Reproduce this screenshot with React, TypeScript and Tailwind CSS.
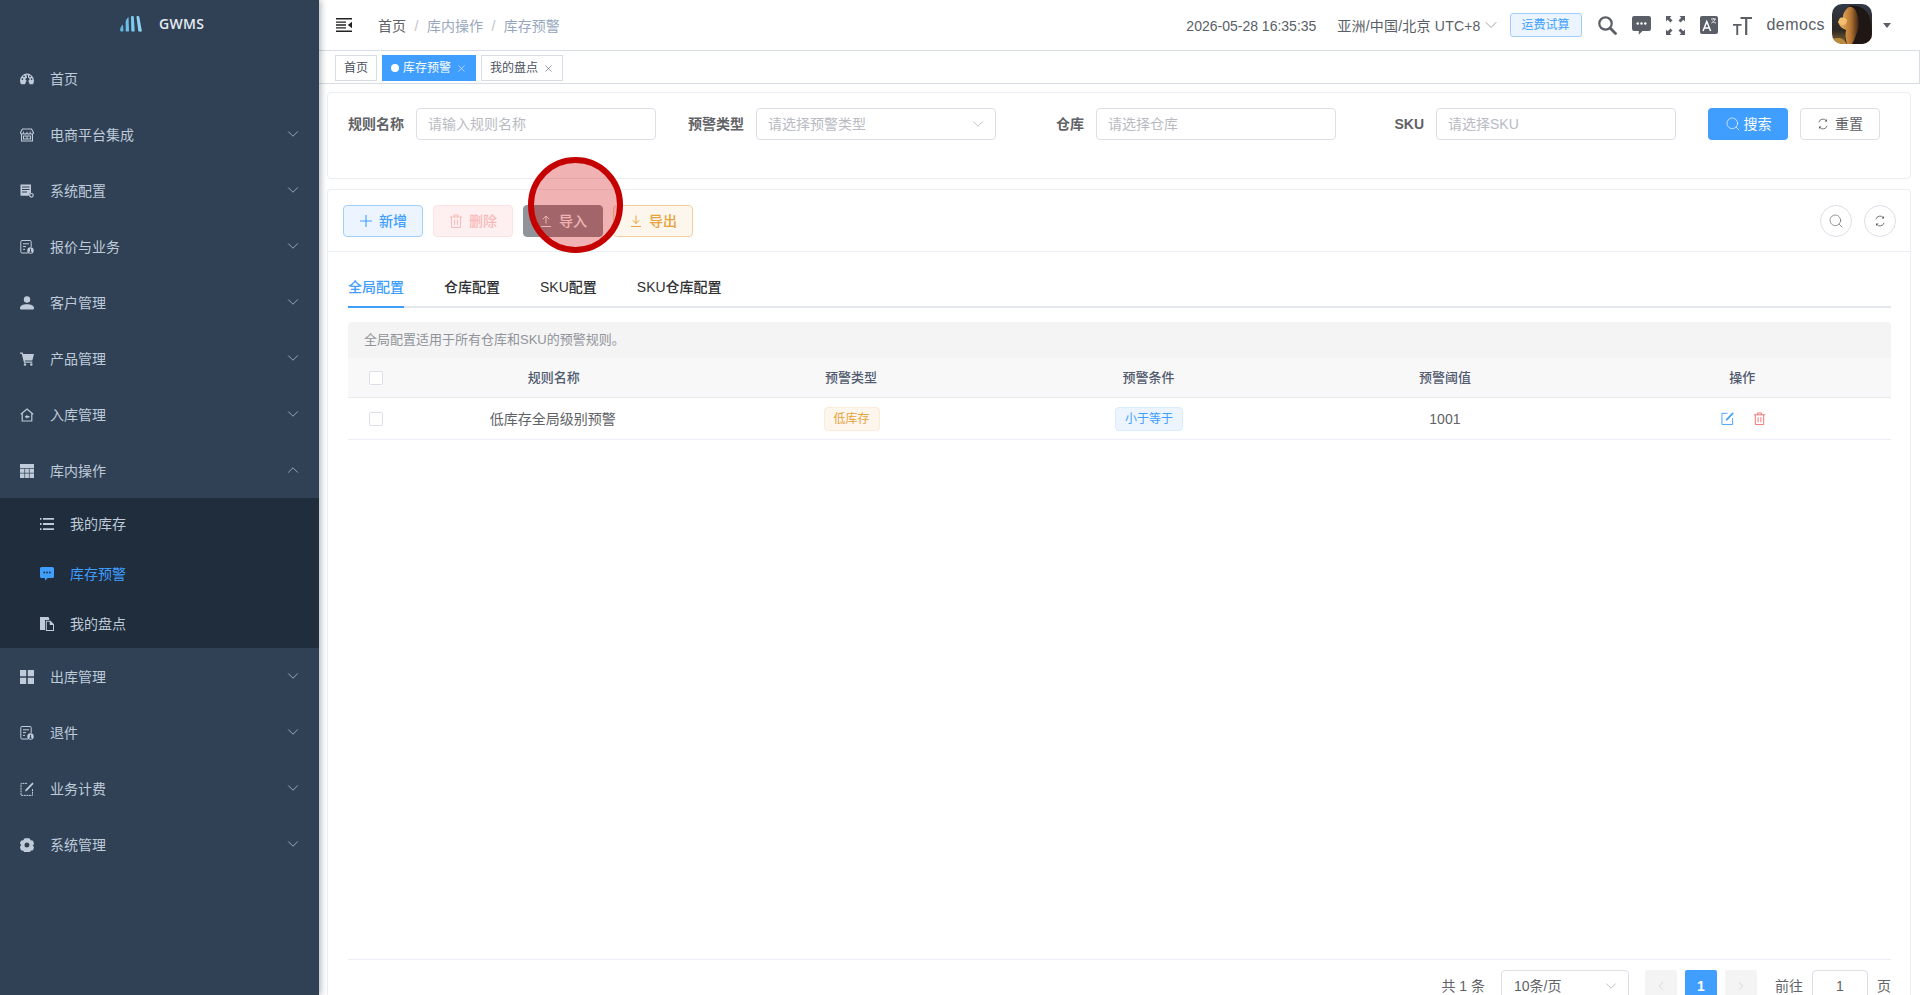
import { ChevronDown, ChevronLeft, ChevronRight, ChevronUp, Search, X } from "lucide-react";
import type { ReactNode } from "react";

const ic = "w-[14px] h-[14px] shrink-0";

function Svg({ children, className = ic }: { children: ReactNode; className?: string }) {
  return (
    <svg viewBox="0 0 14 14" className={className} fill="none">
      {children}
    </svg>
  );
}

const DashIcon = () => (
  <Svg>
    <path
      fill="currentColor"
      fillRule="evenodd"
      d="M7 1.600a7 7 0 0 1 7 7c0 1.500-.4 2.700-1 3.600H9.600L8.200 8.600a1 1 0 0 0 .1-2.600L7.600 2.800H6.400L7 6a1.300 1.300 0 0 0-.4 2.600l-1.600 3.600H1c-.6-.9-1-2.100-1-3.600a7 7 0 0 1 7-7zM2.400 6.200a.9.9 0 1 0 0 1.800.9.9 0 0 0 0-1.800zm9.200 0a.9.9 0 1 0 0 1.800.9.9 0 0 0 0-1.800zM4 3.400a.9.9 0 1 0 0 1.800.9.9 0 0 0 0-1.800zm6 0a.9.9 0 1 0 0 1.800.9.9 0 0 0 0-1.800z"
    />
  </Svg>
);
const ShopIcon = () => (
  <Svg>
    <path
      stroke="currentColor"
      strokeWidth="1.100"
      d="M2.500 1h9l2 3.500c0 1-.8 1.600-1.600 1.600s-1.500-.6-1.700-1.300c-.2.700-1 1.300-1.800 1.300S7.200 5.500 7 4.800c-.3.700-1 1.300-1.900 1.300S3.700 5.500 3.500 4.800C3.300 5.500 2.700 6.100 2 6.100S.5 5.500.5 4.500L2.500 1zM1.500 6v7h11V6M3.500 8h7v3h-7zM7 8v3"
    />
  </Svg>
);
const ConfigIcon = () => (
  <Svg>
    <path fill="currentColor" d="M.5.500h10.500v8.200a3 3 0 0 0-2.300 3H.5z" />
    <path stroke="#304156" strokeWidth="1" d="M2 3h7.500M2 5.500h7.500M2 8h5" />
    <circle cx="11.400" cy="11.300" r="1.800" stroke="currentColor" strokeWidth="1.200" />
  </Svg>
);
const QuoteIcon = () => (
  <Svg>
    <path
      stroke="currentColor"
      strokeWidth="1"
      d="M8 13H2a1.200 1.200 0 0 1-1.200-1.200V1.700A1.200 1.200 0 0 1 2 .5h8A1.200 1.200 0 0 1 11.200 1.700V7M3 3.800h6M3 6.600h3M3 9.400h2"
    />
    <circle cx="10.500" cy="10.500" r="3.200" fill="currentColor" />
    <path stroke="#304156" strokeWidth="1" d="M10.500 8.800v3.400M9.200 12.200h2.600" />
  </Svg>
);
const UserIcon = () => (
  <Svg>
    <circle cx="7" cy="3.500" r="3.200" fill="currentColor" />
    <path fill="currentColor" d="M0 12.200c0-2.600 3-4 7-4s7 1.400 7 4c0 .9-.5 1.300-1.300 1.300H1.300C.5 13.500 0 13.100 0 12.200z" />
  </Svg>
);
const CartIcon = () => (
  <Svg>
    <path fill="currentColor" d="M0 .5h2.700l.5 1.600H14l-1.700 6.300H4.800l.3 1H12.300v1.300H4L1.700 1.800H0z" />
    <circle cx="5" cy="12.500" r="1.200" fill="currentColor" />
    <circle cx="11.300" cy="12.500" r="1.200" fill="currentColor" />
  </Svg>
);
const InboundIcon = () => (
  <Svg>
    <path stroke="currentColor" strokeWidth="1.200" d="M.8 6.200 7 1l6.200 5.200M2.200 5.200v7.800h9.600V5.200" />
    <path fill="currentColor" d="M4.700 8.700 7.300 6.700v1.400h2.200v1.300H7.300v1.400z" />
  </Svg>
);
const TableIcon = () => (
  <Svg>
    <path fill="currentColor" d="M0 0h14v14H0z" />
    <path stroke="#304156" strokeWidth=".7" d="M0 4.500h14M0 9.200h14M4.700 4.500V14M9.300 4.500V14" />
  </Svg>
);
const ListIcon = () => (
  <Svg>
    <path
      fill="currentColor"
      d="M0 1h1.500v1.800H0zM3 1h11v1.800H3zM0 6.100h1.500v1.800H0zM3 6.100h11v1.800H3zM0 11.200h1.500V13H0zM3 11.200h11V13H3z"
    />
  </Svg>
);
const ChatIcon = ({ className }: { className?: string }) => (
  <Svg className={className ?? ic}>
    <path fill="currentColor" d="M1.600 0h10.800A1.600 1.600 0 0 1 14 1.600v7.800A1.600 1.600 0 0 1 12.400 11H7.700L5 13.800V11H1.600A1.600 1.600 0 0 1 0 9.400V1.600A1.600 1.600 0 0 1 1.600 0z" />
    <circle cx="4.200" cy="5.500" r=".9" fill="var(--dot)" />
    <circle cx="7" cy="5.500" r=".9" fill="var(--dot)" />
    <circle cx="9.800" cy="5.500" r=".9" fill="var(--dot)" />
  </Svg>
);
const CopyIcon = () => (
  <Svg>
    <path fill="currentColor" d="M0 0h8.200l1 1v2H5v10H0z" />
    <path fill="currentColor" d="M5.800 3.800h4.700L14 7.200V14H5.800zM6.800 4.800V13H13V8H9.700V4.800z" />
  </Svg>
);
const GridIcon = () => (
  <Svg>
    <path fill="currentColor" d="M0 0h6.200v6.200H0zM7.800 0H14v6.200H7.800zM0 7.800h6.200V14H0zM7.800 7.800H14V14H7.800z" />
  </Svg>
);
const EditIcon = ({ className }: { className?: string }) => (
  <Svg className={className ?? ic}>
    <path stroke="currentColor" strokeWidth="1" strokeDasharray={className ? undefined : "2 .6"} d="M7 1.400H1v12h11.500V6.500" />
    <path fill="currentColor" d="M12.400.4l1.300 1.300L7 8.800l-2 .7.600-2z" />
  </Svg>
);
const GearIcon = () => (
  <Svg>
    <path
      fill="currentColor"
      fillRule="evenodd"
      d="M4.600.3h4.800l1.400 1.900 2.300.5 1 3.300-1.400 1.500 1.400 1.500-1 3.300-2.300.5-1.400 1.900H4.600l-1.400-1.900-2.300-.5-1-3.300L1.300 7-.1 5.500l1-2.800 2.300-.5zM7 4.500a2.500 2.500 0 1 0 0 5 2.500 2.500 0 0 0 0-5z"
    />
  </Svg>
);
const PlusIcon = () => (
  <Svg>
    <path stroke="currentColor" strokeWidth="1.100" d="M7 1v12M1 7h12" />
  </Svg>
);
const TrashIcon = ({ className }: { className?: string }) => (
  <Svg className={className ?? ic}>
    <path stroke="currentColor" strokeWidth="1" d="M1 3h12M5 3V1h4v2M2.500 3v10.500h9V3M5.500 5.500v5.500M8.500 5.500v5.500" />
  </Svg>
);
const UploadIcon = () => (
  <Svg>
    <path stroke="currentColor" strokeWidth="1" d="M2 12.500h10M7 9.500V2M3.800 5.200 7 2l3.200 3.200" />
  </Svg>
);
const DownloadIcon = () => (
  <Svg>
    <path stroke="currentColor" strokeWidth="1" d="M2 12.500h10M7 1.500V9.500M3.800 6.300 7 9.500l3.200-3.200" />
  </Svg>
);
const RefreshIcon = ({ className }: { className?: string }) => (
  <Svg className={className ?? ic}>
    <path stroke="currentColor" strokeWidth="1" d="M2.200 5A5 5 0 0 1 11 3.200M11.800 9A5 5 0 0 1 3 10.800" />
    <path fill="currentColor" d="M11.700 1.200v3h-3zM2.300 12.800v-3h3z" />
  </Svg>
);

function Logo() {
  return (
    <svg viewBox="0 0 22 16" className="w-[22px] h-[16px]">
      <path fill="#5fb6e0" d="M.2 13c.3-1.700 1.400-3.600 2.700-4.600l.6 6.200c.1 1.300-3.500 1.400-3.300-.1z" />
      <path fill="#6cc0e8" d="M5.700 5.500c.3-2 2.100-4 2.800-4.500l.5 14c0 .8-3.300.8-3.300 0z" />
      <path fill="#7ccbee" d="M11 1c0-1.200 2.700-1.200 2.800 0l.9 14c0 .8-3.300.8-3.400 0z" />
      <path fill="#8dd2f2" d="M16.500 1c0-1.200 2.500-1.200 2.800 0l2.500 13.800c.2 1-3.200 1.200-3.500.2z" />
    </svg>
  );
}

function Avatar() {
  return (
    <svg viewBox="0 0 40 40" className="w-10 h-10 rounded-[10px]">
      <defs>
        <linearGradient id="lion-bg" x1="0" y1="0" x2="0" y2="1">
          <stop offset="0" stopColor="#323a48" />
          <stop offset=".65" stopColor="#2c2824" />
          <stop offset="1" stopColor="#8a6a34" />
        </linearGradient>
        <linearGradient id="lion-body" x1="0" y1="0" x2="1" y2="0">
          <stop offset="0" stopColor="#f0b868" />
          <stop offset=".6" stopColor="#b57430" />
          <stop offset="1" stopColor="#3a2414" />
        </linearGradient>
      </defs>
      <rect width="40" height="40" fill="url(#lion-bg)" />
      <path fill="#1e1714" d="M17 2c9-2 19 3 21 13 2 8 2 18 2 25H14c-2-8-1-30 3-38z" />
      <path fill="url(#lion-body)" d="M17 3c3-1 7 2 8 7 3 7 2 15-1 21-1 3-2 6-4 9h-5c-2-6-2-10-1-14-3-1-6-3-7-6 1-3 3-5 4-7 0-4 3-8 6-10z" />
      <path fill="#f4bd6e" d="M8 14c3-1 6 0 7 2 0 3-2 6-5 5l-4-2c0-2 1-3 2-5z" />
      <path fill="#b98a3e" d="M0 35c8-2 11-1 15 5H0z" />
    </svg>
  );
}

const menu: { label: string; icon: ReactNode; arrow?: boolean }[] = [
  { label: "首页", icon: <DashIcon /> },
  { label: "电商平台集成", icon: <ShopIcon />, arrow: true },
  { label: "系统配置", icon: <ConfigIcon />, arrow: true },
  { label: "报价与业务", icon: <QuoteIcon />, arrow: true },
  { label: "客户管理", icon: <UserIcon />, arrow: true },
  { label: "产品管理", icon: <CartIcon />, arrow: true },
  { label: "入库管理", icon: <InboundIcon />, arrow: true },
];

const menuAfter = [
  { label: "出库管理", icon: <GridIcon /> },
  { label: "退件", icon: <QuoteIcon /> },
  { label: "业务计费", icon: <EditIcon /> },
  { label: "系统管理", icon: <GearIcon /> },
];

function MenuRow({ label, icon, arrow, up }: { label: string; icon: ReactNode; arrow?: boolean; up?: boolean }) {
  return (
    <div className="h-14 flex items-center pt-[2px] pl-5 pr-[17px] text-sm text-[#bfcbd9]">
      {icon}
      <span className="ml-4 flex-1">{label}</span>
      {arrow && (up ? <ChevronUp size={18} strokeWidth={1} className="-mt-[2px]" /> : <ChevronDown size={18} strokeWidth={1} className="-mt-[2px]" />)}
    </div>
  );
}

function SubRow({ label, icon, active }: { label: string; icon: ReactNode; active?: boolean }) {
  return (
    <div className={`h-[50px] flex items-center pt-[2px] pl-10 text-sm [--dot:#1f2d3d] ${active ? "text-[#409eff]" : "text-[#bfcbd9]"}`}>
      {icon}
      <span className="ml-4">{label}</span>
    </div>
  );
}

function Sidebar() {
  return (
    <aside className="w-[319px] shrink-0 h-full bg-[#304156] relative z-10 shadow-[2px_0_6px_rgba(0,21,41,0.3)]">
      <div className="h-[50px] flex items-center pl-[120px] pb-[2px]">
        <Logo />
        <span className="ml-[17px] text-sm font-semibold tracking-[0.3px] text-[#e6ebf0] [font-family:'Open_Sans',sans-serif]">GWMS</span>
      </div>
      {menu.map((m) => (
        <MenuRow key={m.label} {...m} />
      ))}
      <MenuRow label="库内操作" icon={<TableIcon />} arrow up />
      <div className="bg-[#1f2d3d]">
        <SubRow label="我的库存" icon={<ListIcon />} />
        <SubRow label="库存预警" icon={<ChatIcon />} active />
        <SubRow label="我的盘点" icon={<CopyIcon />} />
      </div>
      {menuAfter.map((m) => (
        <MenuRow key={m.label} label={m.label} icon={m.icon} arrow />
      ))}
    </aside>
  );
}

function Header() {
  return (
    <header className="h-[51px] shrink-0 flex items-center border-b border-[#d8dce5] pl-[17px] pr-[29px] text-sm">
      <svg viewBox="0 0 16 14" className="w-4 h-[14px] text-[#222]">
        <path fill="currentColor" d="M0 0h16v1.600H0zM0 12.400h16V14H0zM0 6.200h10v1.600H0zM0 3.400h10v1.400H0zM0 9.200h10v1.400H0zM16 3.800v6.400L11.800 7z" />
      </svg>
      <span className="ml-[26px] pt-[2px] text-[#606266]">首页</span>
      <span className="mx-[8.5px] pt-[2px] text-[#c0c4cc]">/</span>
      <span className="pt-[2px] text-[#97a8be]">库内操作</span>
      <span className="mx-[8.5px] pt-[2px] text-[#c0c4cc]">/</span>
      <span className="pt-[2px] text-[#97a8be]">库存预警</span>

      <span className="ml-auto pt-[2px] text-[#5a5e66]">2026-05-28 16:35:35</span>
      <span className="ml-[21px] pt-[2px] tracking-[0.2px] text-[#5a5e66]">亚洲/中国/北京 UTC+8</span>
      <ChevronDown size={20} strokeWidth={0.7} className="text-[#5a5e66]" />
      <button className="ml-[9px] w-[72px] h-6 rounded-[3px] border border-[#a0cfff] bg-[#ecf5ff] text-xs text-[#409eff]">运费试算</button>
      <svg viewBox="0 0 19 19" className="ml-4 w-[19px] h-[19px] text-[#5a5e66]" fill="none" stroke="currentColor">
        <circle cx="7.500" cy="7.500" r="6.200" strokeWidth="2.200" />
        <path strokeWidth="2.800" strokeLinecap="round" d="M12.300 12.300 17.500 17.500" />
      </svg>
      <span className="ml-[15px] text-[#5a5e66] [--dot:#fff]">
        <ChatIcon className="w-[19px] h-[19px]" />
      </span>
      <svg viewBox="0 0 19 19" className="ml-[15px] w-[19px] h-[19px] text-[#5a5e66]">
        <path
          fill="currentColor"
          d="M0 0h5.500L3.800 1.700 6.500 4.400 4.400 6.500 1.700 3.800 0 5.500zM19 0v5.500l-1.700-1.700-2.700 2.700-2.100-2.100 2.700-2.700L13.500 0zM0 19v-5.500l1.700 1.700 2.700-2.700 2.100 2.100-2.700 2.700L5.500 19zM19 19h-5.500l1.700-1.700-2.700-2.700 2.100-2.100 2.700 2.700 1.700-1.700z"
        />
      </svg>
      <svg viewBox="0 0 18 18" className="ml-[15px] w-[18px] h-[18px]">
        <rect width="18" height="18" rx="2" fill="#5a5e66" />
        <path stroke="#fff" strokeWidth="1.500" fill="none" d="M3 15 6.800 5.500 10.600 15M4.500 12h4.600" />
        <path stroke="#fff" strokeWidth=".8" fill="none" d="M11 3h5M13.500 2v1M15 3c-.4 2-1.800 3.400-3.700 4M12.300 4.500c.6 1.200 2 2.200 3.700 2.600" />
      </svg>
      <svg viewBox="0 0 19 19" className="ml-[15px] w-[19px] h-[19px] text-[#5a5e66]">
        <path fill="currentColor" d="M7.500 1H19v2h-4.700v16h-2.200V3H7.500zM0 8h8.500v1.800H5.200V19H3.300V9.800H0z" />
      </svg>
      <span className="ml-[15px] text-base tracking-[0.4px] text-[#5a5e66]">democs</span>
      <span className="ml-[7px] -mt-[3px]">
        <Avatar />
      </span>
      <span className="ml-[11px] w-0 h-0 border-x-[4px] border-x-transparent border-t-[5px] border-t-[#5a5e66]" />
    </header>
  );
}

function Tag({ label, active, close }: { label: string; active?: boolean; close?: boolean }) {
  return (
    <div
      className={`h-[26px] flex items-center px-2 text-xs border ${
        active ? "bg-[#409eff] border-[#409eff] text-white" : "bg-white border-[#d8dce5] text-[#495060]"
      }`}
    >
      {active && <span className="w-2 h-2 rounded-full bg-white mr-1" />}
      {label}
      {close && <X size={11} strokeWidth={1.200} className="ml-[5px]" />}
    </div>
  );
}

function TagsBar() {
  return (
    <div className="h-[33px] shrink-0 flex items-start pt-[4px] gap-[5px] pl-[16px] border-b border-r border-[#d8dce5]">
      <Tag label="首页" />
      <Tag label="库存预警" active close />
      <Tag label="我的盘点" close />
    </div>
  );
}

function Field({ label, placeholder, select }: { label: string; placeholder: string; select?: boolean }) {
  return (
    <div className="flex items-center mr-8">
      <label className="w-[68px] pr-3 text-right text-sm font-bold text-[#606266]">{label}</label>
      <div className="w-[240px] h-8 flex items-center justify-between border border-[#dcdfe6] rounded-[4px] pl-[11px] pr-3 text-sm text-[#b8bbc2]">
        {placeholder}
        {select && <ChevronDown size={18} strokeWidth={1} className="-mr-[4px] text-[#a8abb2]" />}
      </div>
    </div>
  );
}

function ToolButton({ className, icon, label }: { className: string; icon: ReactNode; label: string }) {
  return (
    <button className={`w-20 h-8 flex items-center justify-center gap-[6px] rounded-[4px] border text-sm font-medium ${className}`}>
      {icon}
      {label}
    </button>
  );
}

const tabs = ["全局配置", "仓库配置", "SKU配置", "SKU仓库配置"];
const gridCols = "grid grid-cols-[56px_repeat(5,1fr)] items-center text-center";

function Checkbox() {
  return <span className="mx-auto block w-[14px] h-[14px] rounded-[2px] border border-[#dcdfe6] bg-white" />;
}

function Pagination() {
  return (
    <div className="flex items-start border-t border-[#ebeef5] mt-auto pt-[10px] h-[36px] text-sm text-[#606266]">
      <span className="ml-auto mt-[6px]">共 1 条</span>
      <div className="ml-4 w-[128px] h-8 shrink-0 flex items-center justify-between border border-[#dcdfe6] rounded-[4px] pl-3 pr-3">
        10条/页
        <ChevronDown size={18} strokeWidth={1} className="-mr-[4px] text-[#a8abb2]" />
      </div>
      <span className="ml-4 w-8 h-8 flex items-center justify-center rounded-[2px] bg-[#f4f4f5] text-[#c0c4cc]">
        <ChevronLeft size={14} strokeWidth={1} />
      </span>
      <span className="ml-2 w-8 h-8 flex items-center justify-center rounded-[2px] bg-[#409eff] text-white font-bold">1</span>
      <span className="ml-2 w-8 h-8 flex items-center justify-center rounded-[2px] bg-[#f4f4f5] text-[#c0c4cc]">
        <ChevronRight size={14} strokeWidth={1} />
      </span>
      <span className="ml-[18px] mt-[6px]">前往</span>
      <div className="ml-[9px] w-[56px] h-8 flex items-center justify-center border border-[#dcdfe6] rounded-[4px]">1</div>
      <span className="ml-[9px] mt-[6px]">页</span>
    </div>
  );
}

function Content() {
  return (
    <main className="flex-1 min-h-0 pl-2 pr-[9px] pt-2 flex flex-col gap-[10px]">
      <section className="h-[87px] shrink-0 border border-[#ebeef5] rounded-[4px] pl-5 pt-[15px] flex items-start">
        <Field label="规则名称" placeholder="请输入规则名称" />
        <Field label="预警类型" placeholder="请选择预警类型" select />
        <Field label="仓库" placeholder="请选择仓库" />
        <Field label="SKU" placeholder="请选择SKU" />
        <button className="w-20 h-8 flex items-center justify-center gap-[3px] rounded-[4px] bg-[#409eff] text-white text-sm">
          <Search size={16} strokeWidth={1} />
          搜索
        </button>
        <button className="ml-3 w-20 h-8 flex items-center justify-center gap-[6px] rounded-[4px] border border-[#dcdfe6] text-[#606266] text-sm">
          <RefreshIcon className="w-3 h-3" />
          重置
        </button>
      </section>

      <section className="flex-1 min-h-0 border border-[#ebeef5] border-b-0 rounded-t-[4px] flex flex-col">
        <div className="h-[62px] shrink-0 border-b border-[#ebeef5] flex items-center gap-[10px] pl-[15px] pr-[14px]">
          <ToolButton className="bg-[#ecf5ff] border-[#a0cfff] text-[#409eff]" icon={<PlusIcon />} label="新增" />
          <ToolButton className="bg-[#fef0f0] border-[#fde2e2] text-[#f9b9b9]" icon={<TrashIcon />} label="删除" />
          <ToolButton className="bg-[#909399] border-[#909399] text-white" icon={<UploadIcon />} label="导入" />
          <ToolButton className="bg-[#fdf6ec] border-[#f3d19e] text-[#e6a23c]" icon={<DownloadIcon />} label="导出" />
          <button className="ml-auto w-8 h-8 flex items-center justify-center rounded-full border border-[#dcdfe6] text-[#606266]">
            <Search size={16} strokeWidth={1} />
          </button>
          <button className="ml-[2px] w-8 h-8 flex items-center justify-center rounded-full border border-[#dcdfe6] text-[#606266]">
            <RefreshIcon className="w-3 h-3" />
          </button>
        </div>

        <div className="flex-1 min-h-0 flex flex-col pl-5 pr-[19px]">
          <div className="h-[56px] shrink-0 flex items-end border-b-2 border-[#e4e7ed] text-sm font-medium text-[#303133]">
            {tabs.map((t, i) => (
              <div
                key={t}
                className={`h-10 -mb-[2px] flex items-center border-b-2 ${i === 0 ? "border-[#409eff] text-[#409eff]" : "border-transparent ml-10"}`}
              >
                {t}
              </div>
            ))}
          </div>
          <div className="mt-[14px] h-9 shrink-0 flex items-center px-4 bg-[#f4f4f5] rounded-t-[4px] text-[13px] text-[#909399]">
            全局配置适用于所有仓库和SKU的预警规则。
          </div>
          <div className={`${gridCols} h-10 shrink-0 bg-[#f8f8f9] border-b border-[#e8eaef] text-[13px] font-medium text-[#515a6e]`}>
            <Checkbox />
            <span className="pl-[2px]">规则名称</span>
            <span className="pl-[2px]">预警类型</span>
            <span className="pl-[2px]">预警条件</span>
            <span>预警阈值</span>
            <span>操作</span>
          </div>
          <div className={`${gridCols} h-[42px] shrink-0 border-b border-[#ebeef5] text-sm text-[#606266]`}>
            <Checkbox />
            <span>低库存全局级别预警</span>
            <span>
              <span className="ml-[3px] inline-block w-[56px] h-6 leading-[22px] rounded-[4px] border border-[#faecd8] bg-[#fdf6ec] text-xs text-[#e6a23c]">低库存</span>
            </span>
            <span>
              <span className="ml-[3px] inline-block w-[68px] h-6 leading-[22px] rounded-[4px] border border-[#d9ecff] bg-[#ecf5ff] text-xs text-[#409eff]">小于等于</span>
            </span>
            <span>1001</span>
            <span className="flex items-center justify-center gap-[19px] pl-[2px]">
              <span className="text-[#409eff]">
                <EditIcon className="w-[13px] h-[13px]" />
              </span>
              <span className="text-[#f56c6c]">
                <TrashIcon className="w-[13px] h-[13px]" />
              </span>
            </span>
          </div>
          <Pagination />
        </div>
      </section>
    </main>
  );
}

export default function App() {
  return (
    <div className="w-[1920px] h-[995px] overflow-hidden flex bg-white relative [font-family:'Liberation_Sans','Noto_Sans_CJK_SC',sans-serif]">
      <Sidebar />
      <div className="flex-1 min-w-0 h-full flex flex-col">
        <Header />
        <TagsBar />
        <Content />
      </div>
      {/* click marker drawn over the import button */}
      <div className="absolute left-[528px] top-[157px] w-[95px] h-[96px] rounded-full border-[6px] border-[#c40000] bg-[rgba(204,0,0,0.3)] z-20" />
    </div>
  );
}
